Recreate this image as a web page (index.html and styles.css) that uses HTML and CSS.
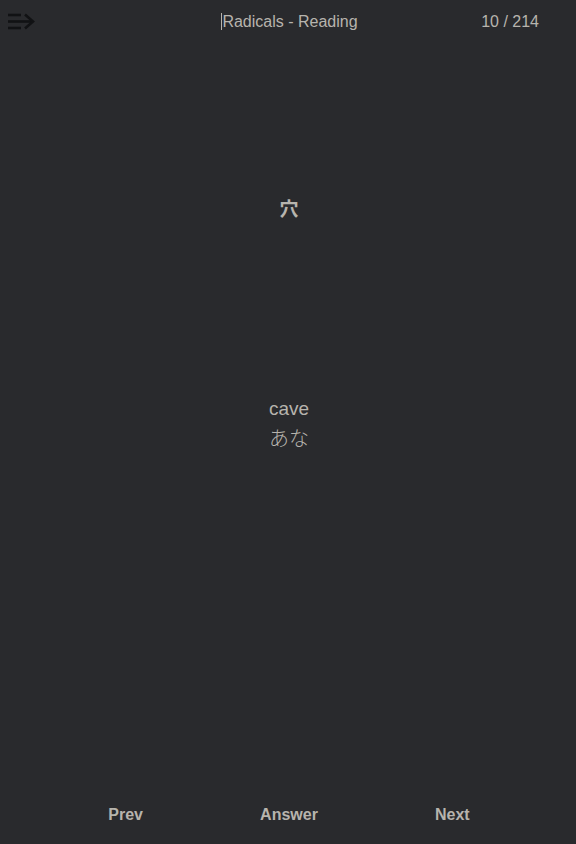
FILE: index.html
```html
<!DOCTYPE html>
<html>
<head>
<meta charset="utf-8">
<link rel="stylesheet" href="styles.css">
</head>
<body>
<div class="app">
  <header class="topbar">
    <button class="menu" aria-label="menu">
      <svg width="28" height="18" viewBox="0 0 28 18">
        <g stroke="#111214" stroke-width="2.6" fill="none" stroke-linecap="butt">
          <line x1="0" y1="2" x2="13" y2="2"/>
          <line x1="0" y1="8.5" x2="25" y2="8.5"/>
          <line x1="0" y1="15" x2="13" y2="15"/>
          <polyline points="17,1.5 25,8.5 17,15.5" stroke-linejoin="miter"/>
        </g>
      </svg>
    </button>
    <div class="title"><span class="caret"></span>Radicals - Reading</div>
    <div class="count">10 / 214</div>
  </header>
  <main class="card">
    <div class="kanji">穴</div>
    <div class="answer">
      <div class="meaning">cave</div>
      <div class="reading">あな</div>
    </div>
  </main>
  <footer class="controls">
    <button class="ctl">Prev</button>
    <button class="ctl">Answer</button>
    <button class="ctl">Next</button>
  </footer>
</div>
</body>
</html>
```
FILE: styles.css
```css
* { box-sizing: border-box; }
html, body {
  margin: 0;
  padding: 0;
  height: 100%;
  background: #292a2d;
}
body {
  font-family: Arial, "Liberation Sans", "Noto Sans CJK JP", sans-serif;
  color: #b7b4ad;
}
.app {
  height: 844px;
  display: flex;
  flex-direction: column;
}
.topbar {
  height: 43px;
  display: grid;
  grid-template-columns: 1fr auto 1fr;
  align-items: center;
  padding: 1px 8px 0 8px;
}
.menu {
  background: none;
  border: 0;
  padding: 0;
  margin: 0;
  width: 28px;
  height: 18px;
  display: flex;
}
.title {
  text-align: center;
  font-size: 16px;
  padding-left: 3px;
  line-height: 18px;
}
.caret {
  display: inline-block;
  width: 1px;
  height: 17px;
  background: #b7b4ad;
  vertical-align: -3px;
}
.count {
  justify-self: end;
  margin-right: 29px;
  font-size: 16px;
  line-height: 18px;
}
.card {
  flex: 1;
  display: flex;
  flex-direction: column;
  align-items: center;
  padding-left: 2px;
}
.kanji {
  margin-top: 153px;
  font-size: 19px;
  font-weight: bold;
  line-height: 24px;
  font-family: "Noto Sans CJK JP", sans-serif;
}
.answer {
  margin-top: 174px;
  text-align: center;
  font-size: 19px;
  line-height: 29px;
}
.reading {
  font-family: "Noto Sans CJK JP", sans-serif;
  font-size: 20px;
  font-weight: 300;
  line-height: 29px;
}
.controls {
  display: grid;
  grid-template-columns: 1fr 1fr 1fr;
  padding: 0 42px 0 44px;
  height: 44px;
  align-items: start;
}
.ctl {
  background: none;
  border: 0;
  color: #b7b4ad;
  font-family: Arial, "Liberation Sans", sans-serif;
  font-weight: bold;
  font-size: 16px;
  padding: 6px 0;
  line-height: 18px;
}
```
